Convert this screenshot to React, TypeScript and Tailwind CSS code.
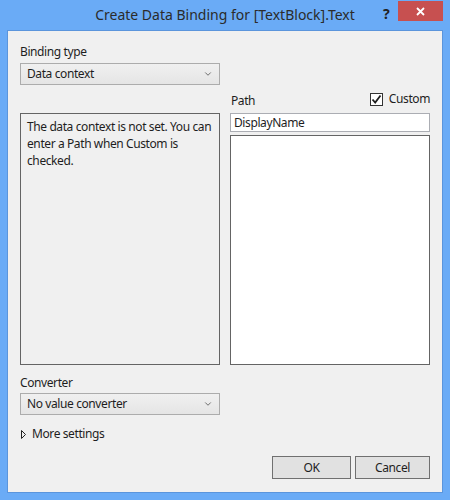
import { ChevronDown } from "lucide-react";

const font = { fontFamily: '"Noto Sans", "Segoe UI", sans-serif' };

function Dropdown({ value }: { value: string }) {
  return (
    <div className="flex h-[22px] w-[200px] items-center justify-between border border-[#acacac] bg-gradient-to-b from-[#f0f0f0] to-[#e5e5e5] pl-[6px] pr-[6px] text-[12px] tracking-[-0.4px] text-[#1e1e1e]">
      <span>{value}</span>
      <ChevronDown className="h-[10px] w-[10px] text-[#555]" strokeWidth={2} />
    </div>
  );
}

export default function App() {
  return (
    <div
      className="flex h-[500px] w-[450px] flex-col bg-[#6aabf6] text-[#1e1e1e]"
      style={font}
    >
      {/* title bar */}
      <div className="relative flex h-[30px] items-center justify-center">
        <span className="pb-[1px] text-[14px] text-[#2b2b2b]">
          Create Data Binding for [TextBlock].Text
        </span>
        <span className="absolute left-[383px] top-[3px] text-[14px] font-bold text-[#222]">
          ?
        </span>
        <div className="absolute left-[398px] top-[1px] flex h-[20px] w-[45px] items-center justify-center bg-[#c75050]">
          <svg width="9" height="9" viewBox="0 0 9 9">
            <path d="M1 1 L8 8 M8 1 L1 8" stroke="#fff" strokeWidth="1.8" />
          </svg>
        </div>
      </div>

      {/* client area */}
      <div className="ml-[7px] flex h-[463px] w-[436px] flex-col border border-[#5b95dc] bg-[#f0f0f0] px-[12px] pt-[13px] text-[12px] tracking-[-0.4px]">
        <div className="leading-[16px]">Binding type</div>
        <div className="mt-[3px]">
          <Dropdown value="Data context" />
        </div>

        <div className="mt-[5px] flex h-[275px] gap-[10px]">
          <div className="flex w-[200px] flex-col pt-[23px]">
            <div className="flex-1 border border-[#646464] pl-[6px] pr-[1px] pt-[4px] leading-[17px]">
              The data context is not set. You can enter a Path when Custom is
              checked.
            </div>
          </div>
          <div className="flex w-[200px] flex-col">
            <div className="flex h-[18px] items-center justify-between">
              <span className="pl-[1px] pt-[4px]">Path</span>
              <label className="flex items-center gap-[6px]">
                <span className="flex h-[13px] w-[13px] items-center justify-center border border-[#333] bg-white">
                  <svg width="11" height="11" viewBox="0 0 11 11">
                    <path
                      d="M1.5 5.5 L4.2 8.5 L9.5 1.5"
                      fill="none"
                      stroke="#1e1e1e"
                      strokeWidth="1.8"
                    />
                  </svg>
                </span>
                <span>Custom</span>
              </label>
            </div>
            <div className="mt-[5px] flex h-[19px] items-center border border-[#abadb3] bg-white pl-[3px]">
              DisplayName
            </div>
            <div className="mt-[3px] flex-1 border border-[#646464] bg-white" />
          </div>
        </div>

        <div className="mt-[10px] leading-[16px]">Converter</div>
        <div className="mt-[2px]">
          <Dropdown value="No value converter" />
        </div>

        <div className="mt-[10px] flex items-center gap-[6px] pl-[1px]">
          <svg width="5" height="9" viewBox="0 0 5 9">
            <path d="M0.5 0.5 L4.5 4.5 L0.5 8.5 Z" fill="none" stroke="#222" />
          </svg>
          <span>More settings</span>
        </div>

        <div className="mt-[13px] flex justify-end gap-[4px]">
          <button className="h-[23px] w-[79px] border border-[#707070] bg-[#e1e1e1] text-[12px] tracking-[-0.4px]">
            OK
          </button>
          <button className="h-[23px] w-[75px] border border-[#707070] bg-[#e1e1e1] text-[12px] tracking-[-0.4px]">
            Cancel
          </button>
        </div>
      </div>
    </div>
  );
}
